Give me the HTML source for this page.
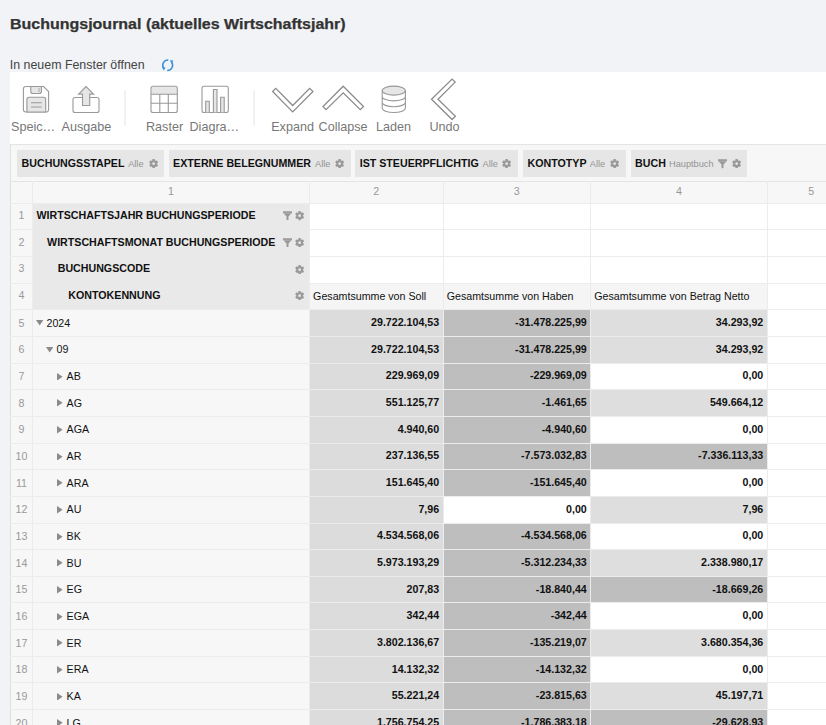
<!DOCTYPE html>
<html><head><meta charset="utf-8">
<style>
*{margin:0;padding:0;box-sizing:border-box}
html,body{width:826px;height:725px;overflow:hidden;background:#f2f3f7;font-family:"Liberation Sans",sans-serif;position:relative}
.abs{position:absolute;display:block}
.t{position:absolute;white-space:nowrap;line-height:1}
.b{font-weight:bold}
.cell{position:absolute}
.hl{position:absolute;height:1px;background:#e8e8e8}
.vl{position:absolute;width:1px;background:#e8e8e8}
</style></head><body>

<div class="t" style="left:10.00px;top:16.85px;font-size:14px;font-weight:bold;color:#333;transform:scaleX(1.142);transform-origin:0 0;-webkit-text-stroke:0.25px #333">Buchungsjournal (aktuelles Wirtschaftsjahr)</div>
<div class="t" style="left:9.80px;top:58.90px;font-size:12.4px;color:#444">In neuem Fenster öffnen</div>
<svg class="abs" style="left:0;top:0" width="190" height="80" viewBox="0 0 190 80"><g fill="none" stroke="#3990dd" stroke-width="1.5"><path d="M168.3 60A5.3 5.3 0 0 0 163.6 68.2"/><path d="M171.6 62.2A5.3 5.3 0 0 1 167.2 70.6"/></g><g fill="#3990dd"><path d="M162 67.2L165.6 67.4 163.8 70.6z"/><path d="M169.8 60.2L173.4 60.6 171.8 63.8z"/></g></svg>
<div class="abs" style="left:10px;top:72.2px;width:816px;height:71.8px;background:#fff"></div>
<svg class="abs" style="left:0;top:0" width="826" height="145" viewBox="0 0 826 145">
<g fill="none" stroke="#999" stroke-width="1.1">
 <path d="M26 86.5h17.6l5 5V109.5a2.5 2.5 0 0 1-2.5 2.5H25.9a2.5 2.5 0 0 1-2.5-2.5V89a2.5 2.5 0 0 1 2.5-2.5z"/>
 <path d="M30.8 86.5v5a2 2 0 0 0 2 2h6.6a2 2 0 0 0 2-2v-5z" fill="#e6e6e6"/>
 <path d="M39 88v4" stroke-width="0.8"/>
 <path d="M26.9 112V99.5a2.2 2.2 0 0 1 2.2-2.2h14.4a2.2 2.2 0 0 1 2.2 2.2V112z" fill="#e6e6e6"/>
 <path d="M31 102.8h10.8M31 107h10.8"/>
 <path d="M82.5 97.5h-7.5a2 2 0 0 0-2 2V110.5a2 2 0 0 0 2 2h22a2 2 0 0 0 2-2V99.5a2 2 0 0 0-2-2h-7.5"/>
 <path d="M86.1 86.5l-7.5 7.6h3.9v11.4h7.2V94.1h3.9z" fill="#e6e6e6"/>
 <path d="M151.6 86.8h25.2v7.4h-25.2z" fill="#e6e6e6" stroke="none"/>
 <rect x="151" y="86.2" width="26.3" height="26.3" rx="2"/>
 <path d="M151 94.2h26.3M151 103.2h26.3M159.8 94.2v18.3M168.3 94.2v18.3"/>
 <rect x="202" y="86.2" width="26.3" height="26.3" rx="2"/>
 <path d="M205.7 112.2V101.2h3.6v11M213.4 112.2V89.5h3.6v22.7M220.6 112.2V97.2h3.6v15" fill="#e6e6e6"/>
 <path d="M272.6 91.5l3.2-3.2 16.9 17.2 17-17.2 3.3 3.2-20.3 20.4z" stroke="#8a8a8a" stroke-width="1.25"/>
 <path d="M343.2 86.2l20.3 20.3-3.2 3.1-17.1-16.8-17.2 16.8-3-3.1z" stroke="#8a8a8a" stroke-width="1.25"/>
 <ellipse cx="393.8" cy="90.6" rx="11.6" ry="4.5" fill="#e6e6e6"/>
 <path d="M382.2 90.6v17.4c0 2.5 5.2 4.5 11.6 4.5s11.6-2 11.6-4.5V90.6M382.2 96.4c0 2.5 5.2 4.5 11.6 4.5s11.6-2 11.6-4.5M382.2 102.2c0 2.5 5.2 4.5 11.6 4.5s11.6-2 11.6-4.5"/>
 <path d="M452.1 79.1l3.1 3-17.2 17.1 17.4 17-3.3 3.3-20.6-20.3z" stroke="#8a8a8a" stroke-width="1.25"/>
</g>
<rect x="124.5" y="90.5" width="1" height="35" fill="#e3e3e3"/>
<rect x="253.5" y="90.5" width="1" height="35" fill="#e3e3e3"/>
</svg>

<div class="t" style="left:11.00px;top:121.03px;font-size:12.6px;color:#777">Speic…</div>
<div class="t" style="left:61.50px;top:121.03px;font-size:12.6px;color:#777">Ausgabe</div>
<div class="t" style="left:146.00px;top:121.03px;font-size:12.6px;color:#777">Raster</div>
<div class="t" style="left:189.50px;top:121.03px;font-size:12.6px;color:#777">Diagra…</div>
<div class="t" style="left:271.20px;top:121.03px;font-size:12.6px;color:#777">Expand</div>
<div class="t" style="left:318.60px;top:121.03px;font-size:12.6px;color:#777">Collapse</div>
<div class="t" style="left:376.00px;top:121.03px;font-size:12.6px;color:#777">Laden</div>
<div class="t" style="left:429.50px;top:121.03px;font-size:12.6px;color:#777">Undo</div>
<div class="abs" style="left:10px;top:143.8px;width:816px;height:38px;background:#f7f7f7;border-top:1px solid #e4e4e4;border-left:1px solid #e0e0e0"></div>
<div class="cell" style="left:17.4px;top:150.4px;width:146.5px;height:26.2px;background:#e6e6e6"></div>
<div class="t" style="left:21.60px;top:158.27px;font-size:10.67px;font-weight:bold;color:#111">BUCHUNGSSTAPEL</div>
<div class="t" style="left:128.20px;top:159.71px;font-size:9.2px;color:#939393">Alle</div>
<svg class="abs" style="left:148.55px;top:159.15px" width="9.30" height="9.30" viewBox="0 0 20 20"><g fill="#999"><path fill-rule="evenodd" d="M10 2.6a7.4 7.4 0 1 1 0 14.8 7.4 7.4 0 0 1 0-14.8zM10 7.1a2.9 2.9 0 1 0 0 5.8 2.9 2.9 0 0 0 0-5.8z"/><rect x="7.4" y="0.2" width="5.2" height="4" rx="1" transform="rotate(0 10 10)"/><rect x="7.4" y="0.2" width="5.2" height="4" rx="1" transform="rotate(60 10 10)"/><rect x="7.4" y="0.2" width="5.2" height="4" rx="1" transform="rotate(120 10 10)"/><rect x="7.4" y="0.2" width="5.2" height="4" rx="1" transform="rotate(180 10 10)"/><rect x="7.4" y="0.2" width="5.2" height="4" rx="1" transform="rotate(240 10 10)"/><rect x="7.4" y="0.2" width="5.2" height="4" rx="1" transform="rotate(300 10 10)"/></g></svg>
<div class="cell" style="left:168.5px;top:150.4px;width:182.1px;height:26.2px;background:#e6e6e6"></div>
<div class="t" style="left:173.10px;top:158.27px;font-size:10.67px;font-weight:bold;color:#111">EXTERNE BELEGNUMMER</div>
<div class="t" style="left:315.10px;top:159.71px;font-size:9.2px;color:#939393">Alle</div>
<svg class="abs" style="left:335.15px;top:159.15px" width="9.30" height="9.30" viewBox="0 0 20 20"><g fill="#999"><path fill-rule="evenodd" d="M10 2.6a7.4 7.4 0 1 1 0 14.8 7.4 7.4 0 0 1 0-14.8zM10 7.1a2.9 2.9 0 1 0 0 5.8 2.9 2.9 0 0 0 0-5.8z"/><rect x="7.4" y="0.2" width="5.2" height="4" rx="1" transform="rotate(0 10 10)"/><rect x="7.4" y="0.2" width="5.2" height="4" rx="1" transform="rotate(60 10 10)"/><rect x="7.4" y="0.2" width="5.2" height="4" rx="1" transform="rotate(120 10 10)"/><rect x="7.4" y="0.2" width="5.2" height="4" rx="1" transform="rotate(180 10 10)"/><rect x="7.4" y="0.2" width="5.2" height="4" rx="1" transform="rotate(240 10 10)"/><rect x="7.4" y="0.2" width="5.2" height="4" rx="1" transform="rotate(300 10 10)"/></g></svg>
<div class="cell" style="left:355.0px;top:150.4px;width:163.0px;height:26.2px;background:#e6e6e6"></div>
<div class="t" style="left:359.70px;top:158.27px;font-size:10.67px;font-weight:bold;color:#111">IST STEUERPFLICHTIG</div>
<div class="t" style="left:482.50px;top:159.71px;font-size:9.2px;color:#939393">Alle</div>
<svg class="abs" style="left:502.05px;top:159.15px" width="9.30" height="9.30" viewBox="0 0 20 20"><g fill="#999"><path fill-rule="evenodd" d="M10 2.6a7.4 7.4 0 1 1 0 14.8 7.4 7.4 0 0 1 0-14.8zM10 7.1a2.9 2.9 0 1 0 0 5.8 2.9 2.9 0 0 0 0-5.8z"/><rect x="7.4" y="0.2" width="5.2" height="4" rx="1" transform="rotate(0 10 10)"/><rect x="7.4" y="0.2" width="5.2" height="4" rx="1" transform="rotate(60 10 10)"/><rect x="7.4" y="0.2" width="5.2" height="4" rx="1" transform="rotate(120 10 10)"/><rect x="7.4" y="0.2" width="5.2" height="4" rx="1" transform="rotate(180 10 10)"/><rect x="7.4" y="0.2" width="5.2" height="4" rx="1" transform="rotate(240 10 10)"/><rect x="7.4" y="0.2" width="5.2" height="4" rx="1" transform="rotate(300 10 10)"/></g></svg>
<div class="cell" style="left:522.7px;top:150.4px;width:103.2px;height:26.2px;background:#e6e6e6"></div>
<div class="t" style="left:527.50px;top:158.27px;font-size:10.67px;font-weight:bold;color:#111">KONTOTYP</div>
<div class="t" style="left:589.80px;top:159.71px;font-size:9.2px;color:#939393">Alle</div>
<svg class="abs" style="left:609.85px;top:159.15px" width="9.30" height="9.30" viewBox="0 0 20 20"><g fill="#999"><path fill-rule="evenodd" d="M10 2.6a7.4 7.4 0 1 1 0 14.8 7.4 7.4 0 0 1 0-14.8zM10 7.1a2.9 2.9 0 1 0 0 5.8 2.9 2.9 0 0 0 0-5.8z"/><rect x="7.4" y="0.2" width="5.2" height="4" rx="1" transform="rotate(0 10 10)"/><rect x="7.4" y="0.2" width="5.2" height="4" rx="1" transform="rotate(60 10 10)"/><rect x="7.4" y="0.2" width="5.2" height="4" rx="1" transform="rotate(120 10 10)"/><rect x="7.4" y="0.2" width="5.2" height="4" rx="1" transform="rotate(180 10 10)"/><rect x="7.4" y="0.2" width="5.2" height="4" rx="1" transform="rotate(240 10 10)"/><rect x="7.4" y="0.2" width="5.2" height="4" rx="1" transform="rotate(300 10 10)"/></g></svg>
<div class="cell" style="left:630.6px;top:150.4px;width:116.5px;height:26.2px;background:#e6e6e6"></div>
<div class="t" style="left:635.10px;top:158.27px;font-size:10.67px;font-weight:bold;color:#111">BUCH</div>
<div class="t" style="left:669.10px;top:159.71px;font-size:9.2px;color:#939393">Hauptbuch</div>
<svg class="abs" style="left:717.60px;top:159.30px" width="9" height="9.4" viewBox="0 0 10 10"><path fill="#999" d="M0 0h10v1.6L6.1 6V9.3a0.7 0.7 0 0 1-0.7 0.7h-0.8a0.7 0.7 0 0 1-0.7-0.7V6L0 1.6z"/><path d="M0.8 2.3h8.4" stroke="#c4c4c4" stroke-width="0.5"/></svg>
<svg class="abs" style="left:731.65px;top:159.15px" width="9.30" height="9.30" viewBox="0 0 20 20"><g fill="#999"><path fill-rule="evenodd" d="M10 2.6a7.4 7.4 0 1 1 0 14.8 7.4 7.4 0 0 1 0-14.8zM10 7.1a2.9 2.9 0 1 0 0 5.8 2.9 2.9 0 0 0 0-5.8z"/><rect x="7.4" y="0.2" width="5.2" height="4" rx="1" transform="rotate(0 10 10)"/><rect x="7.4" y="0.2" width="5.2" height="4" rx="1" transform="rotate(60 10 10)"/><rect x="7.4" y="0.2" width="5.2" height="4" rx="1" transform="rotate(120 10 10)"/><rect x="7.4" y="0.2" width="5.2" height="4" rx="1" transform="rotate(180 10 10)"/><rect x="7.4" y="0.2" width="5.2" height="4" rx="1" transform="rotate(240 10 10)"/><rect x="7.4" y="0.2" width="5.2" height="4" rx="1" transform="rotate(300 10 10)"/></g></svg>
<div class="abs" style="left:10px;top:181.2px;width:816px;height:543.8px;background:#f7f7f7;border-left:1px solid #dedede;border-top:1px solid #e4e4e4"></div>
<div class="t" style="left:150.95px;top:185.97px;font-size:10.67px;width:40px;text-align:center;color:#999">1</div>
<div class="t" style="left:356.20px;top:185.97px;font-size:10.67px;width:40px;text-align:center;color:#999">2</div>
<div class="t" style="left:496.80px;top:185.97px;font-size:10.67px;width:40px;text-align:center;color:#999">3</div>
<div class="t" style="left:658.85px;top:185.97px;font-size:10.67px;width:40px;text-align:center;color:#999">4</div>
<div class="t" style="left:791.20px;top:185.97px;font-size:10.67px;width:40px;text-align:center;color:#999">5</div>
<div class="cell" style="left:33px;top:203.20px;width:276.4px;height:106.60px;background:#e9e9e9"></div>
<div class="cell" style="left:309.4px;top:203.20px;width:457.7px;height:26.65px;background:#fff"></div>
<div class="cell" style="left:767.1px;top:203.20px;width:70px;height:26.65px;background:#fff"></div>
<div class="t" style="left:10.00px;top:210.17px;font-size:10.67px;width:23px;text-align:center;color:#999">1</div>
<div class="t" style="left:36.50px;top:210.17px;font-size:10.67px;font-weight:bold;color:#111">WIRTSCHAFTSJAHR BUCHUNGSPERIODE</div>
<svg class="abs" style="left:283.30px;top:211.10px" width="9" height="9.4" viewBox="0 0 10 10"><path fill="#999" d="M0 0h10v1.6L6.1 6V9.3a0.7 0.7 0 0 1-0.7 0.7h-0.8a0.7 0.7 0 0 1-0.7-0.7V6L0 1.6z"/><path d="M0.8 2.3h8.4" stroke="#c4c4c4" stroke-width="0.5"/></svg>
<svg class="abs" style="left:294.75px;top:211.25px" width="9.30" height="9.30" viewBox="0 0 20 20"><g fill="#999"><path fill-rule="evenodd" d="M10 2.6a7.4 7.4 0 1 1 0 14.8 7.4 7.4 0 0 1 0-14.8zM10 7.1a2.9 2.9 0 1 0 0 5.8 2.9 2.9 0 0 0 0-5.8z"/><rect x="7.4" y="0.2" width="5.2" height="4" rx="1" transform="rotate(0 10 10)"/><rect x="7.4" y="0.2" width="5.2" height="4" rx="1" transform="rotate(60 10 10)"/><rect x="7.4" y="0.2" width="5.2" height="4" rx="1" transform="rotate(120 10 10)"/><rect x="7.4" y="0.2" width="5.2" height="4" rx="1" transform="rotate(180 10 10)"/><rect x="7.4" y="0.2" width="5.2" height="4" rx="1" transform="rotate(240 10 10)"/><rect x="7.4" y="0.2" width="5.2" height="4" rx="1" transform="rotate(300 10 10)"/></g></svg>
<div class="cell" style="left:309.4px;top:229.85px;width:457.7px;height:26.65px;background:#fff"></div>
<div class="cell" style="left:767.1px;top:229.85px;width:70px;height:26.65px;background:#fff"></div>
<div class="t" style="left:10.00px;top:236.82px;font-size:10.67px;width:23px;text-align:center;color:#999">2</div>
<div class="t" style="left:47.10px;top:236.82px;font-size:10.67px;font-weight:bold;color:#111">WIRTSCHAFTSMONAT BUCHUNGSPERIODE</div>
<svg class="abs" style="left:283.30px;top:237.75px" width="9" height="9.4" viewBox="0 0 10 10"><path fill="#999" d="M0 0h10v1.6L6.1 6V9.3a0.7 0.7 0 0 1-0.7 0.7h-0.8a0.7 0.7 0 0 1-0.7-0.7V6L0 1.6z"/><path d="M0.8 2.3h8.4" stroke="#c4c4c4" stroke-width="0.5"/></svg>
<svg class="abs" style="left:294.75px;top:237.90px" width="9.30" height="9.30" viewBox="0 0 20 20"><g fill="#999"><path fill-rule="evenodd" d="M10 2.6a7.4 7.4 0 1 1 0 14.8 7.4 7.4 0 0 1 0-14.8zM10 7.1a2.9 2.9 0 1 0 0 5.8 2.9 2.9 0 0 0 0-5.8z"/><rect x="7.4" y="0.2" width="5.2" height="4" rx="1" transform="rotate(0 10 10)"/><rect x="7.4" y="0.2" width="5.2" height="4" rx="1" transform="rotate(60 10 10)"/><rect x="7.4" y="0.2" width="5.2" height="4" rx="1" transform="rotate(120 10 10)"/><rect x="7.4" y="0.2" width="5.2" height="4" rx="1" transform="rotate(180 10 10)"/><rect x="7.4" y="0.2" width="5.2" height="4" rx="1" transform="rotate(240 10 10)"/><rect x="7.4" y="0.2" width="5.2" height="4" rx="1" transform="rotate(300 10 10)"/></g></svg>
<div class="cell" style="left:309.4px;top:256.50px;width:457.7px;height:26.65px;background:#fff"></div>
<div class="cell" style="left:767.1px;top:256.50px;width:70px;height:26.65px;background:#fff"></div>
<div class="t" style="left:10.00px;top:263.47px;font-size:10.67px;width:23px;text-align:center;color:#999">3</div>
<div class="t" style="left:57.70px;top:263.47px;font-size:10.67px;font-weight:bold;color:#111">BUCHUNGSCODE</div>
<svg class="abs" style="left:294.75px;top:264.55px" width="9.30" height="9.30" viewBox="0 0 20 20"><g fill="#999"><path fill-rule="evenodd" d="M10 2.6a7.4 7.4 0 1 1 0 14.8 7.4 7.4 0 0 1 0-14.8zM10 7.1a2.9 2.9 0 1 0 0 5.8 2.9 2.9 0 0 0 0-5.8z"/><rect x="7.4" y="0.2" width="5.2" height="4" rx="1" transform="rotate(0 10 10)"/><rect x="7.4" y="0.2" width="5.2" height="4" rx="1" transform="rotate(60 10 10)"/><rect x="7.4" y="0.2" width="5.2" height="4" rx="1" transform="rotate(120 10 10)"/><rect x="7.4" y="0.2" width="5.2" height="4" rx="1" transform="rotate(180 10 10)"/><rect x="7.4" y="0.2" width="5.2" height="4" rx="1" transform="rotate(240 10 10)"/><rect x="7.4" y="0.2" width="5.2" height="4" rx="1" transform="rotate(300 10 10)"/></g></svg>
<div class="cell" style="left:309.4px;top:283.15px;width:457.7px;height:26.65px;background:#f5f5f5"></div>
<div class="cell" style="left:767.1px;top:283.15px;width:70px;height:26.65px;background:#fff"></div>
<div class="t" style="left:10.00px;top:290.12px;font-size:10.67px;width:23px;text-align:center;color:#999">4</div>
<div class="t" style="left:68.30px;top:290.12px;font-size:10.67px;font-weight:bold;color:#111">KONTOKENNUNG</div>
<svg class="abs" style="left:294.75px;top:291.20px" width="9.30" height="9.30" viewBox="0 0 20 20"><g fill="#999"><path fill-rule="evenodd" d="M10 2.6a7.4 7.4 0 1 1 0 14.8 7.4 7.4 0 0 1 0-14.8zM10 7.1a2.9 2.9 0 1 0 0 5.8 2.9 2.9 0 0 0 0-5.8z"/><rect x="7.4" y="0.2" width="5.2" height="4" rx="1" transform="rotate(0 10 10)"/><rect x="7.4" y="0.2" width="5.2" height="4" rx="1" transform="rotate(60 10 10)"/><rect x="7.4" y="0.2" width="5.2" height="4" rx="1" transform="rotate(120 10 10)"/><rect x="7.4" y="0.2" width="5.2" height="4" rx="1" transform="rotate(180 10 10)"/><rect x="7.4" y="0.2" width="5.2" height="4" rx="1" transform="rotate(240 10 10)"/><rect x="7.4" y="0.2" width="5.2" height="4" rx="1" transform="rotate(300 10 10)"/></g></svg>
<div class="t" style="left:313.10px;top:290.72px;font-size:10.67px;color:#111">Gesamtsumme von Soll</div>
<div class="t" style="left:446.70px;top:290.72px;font-size:10.67px;color:#111">Gesamtsumme von Haben</div>
<div class="t" style="left:594.30px;top:290.72px;font-size:10.67px;color:#111">Gesamtsumme von Betrag Netto</div>
<div class="cell" style="left:309.4px;top:309.80px;width:133.6px;height:26.65px;background:#dcdcdc"></div>
<div class="cell" style="left:443px;top:309.80px;width:147.6px;height:26.65px;background:#bebebe"></div>
<div class="cell" style="left:590.6px;top:309.80px;width:176.5px;height:26.65px;background:#dedede"></div>
<div class="cell" style="left:767.1px;top:309.80px;width:70px;height:26.65px;background:#fff"></div>
<div class="t" style="left:10.00px;top:317.77px;font-size:10.67px;width:23px;text-align:center;color:#999">5</div>
<svg class="abs" style="left:36.00px;top:320.40px" width="7.4" height="5.6" viewBox="0 0 7.4 5.6"><path d="M0 0h7.4L3.7 5.6z" fill="#8a8a8a"/></svg>
<div class="t" style="left:46.50px;top:317.77px;font-size:10.67px;color:#111">2024</div>
<div class="t" style="left:309.40px;top:317.07px;font-size:10.67px;width:129.8px;text-align:right;font-weight:bold;color:#111">29.722.104,53</div>
<div class="t" style="left:443.00px;top:317.07px;font-size:10.67px;width:143.8px;text-align:right;font-weight:bold;color:#111">-31.478.225,99</div>
<div class="t" style="left:590.60px;top:317.07px;font-size:10.67px;width:172.7px;text-align:right;font-weight:bold;color:#111">34.293,92</div>
<div class="cell" style="left:309.4px;top:336.45px;width:133.6px;height:26.65px;background:#dcdcdc"></div>
<div class="cell" style="left:443px;top:336.45px;width:147.6px;height:26.65px;background:#bebebe"></div>
<div class="cell" style="left:590.6px;top:336.45px;width:176.5px;height:26.65px;background:#dedede"></div>
<div class="cell" style="left:767.1px;top:336.45px;width:70px;height:26.65px;background:#fff"></div>
<div class="t" style="left:10.00px;top:344.42px;font-size:10.67px;width:23px;text-align:center;color:#999">6</div>
<svg class="abs" style="left:46.00px;top:347.05px" width="7.4" height="5.6" viewBox="0 0 7.4 5.6"><path d="M0 0h7.4L3.7 5.6z" fill="#8a8a8a"/></svg>
<div class="t" style="left:56.50px;top:344.42px;font-size:10.67px;color:#111">09</div>
<div class="t" style="left:309.40px;top:343.72px;font-size:10.67px;width:129.8px;text-align:right;font-weight:bold;color:#111">29.722.104,53</div>
<div class="t" style="left:443.00px;top:343.72px;font-size:10.67px;width:143.8px;text-align:right;font-weight:bold;color:#111">-31.478.225,99</div>
<div class="t" style="left:590.60px;top:343.72px;font-size:10.67px;width:172.7px;text-align:right;font-weight:bold;color:#111">34.293,92</div>
<div class="cell" style="left:309.4px;top:363.10px;width:133.6px;height:26.65px;background:#dcdcdc"></div>
<div class="cell" style="left:443px;top:363.10px;width:147.6px;height:26.65px;background:#bebebe"></div>
<div class="cell" style="left:590.6px;top:363.10px;width:176.5px;height:26.65px;background:#ffffff"></div>
<div class="cell" style="left:767.1px;top:363.10px;width:70px;height:26.65px;background:#fff"></div>
<div class="t" style="left:10.00px;top:371.07px;font-size:10.67px;width:23px;text-align:center;color:#999">7</div>
<svg class="abs" style="left:57.30px;top:372.80px" width="5.6" height="7.6" viewBox="0 0 5.6 7.6"><path d="M0 0L5.6 3.8 0 7.6z" fill="#8a8a8a"/></svg>
<div class="t" style="left:66.60px;top:371.07px;font-size:10.67px;color:#111">AB</div>
<div class="t" style="left:309.40px;top:370.37px;font-size:10.67px;width:129.8px;text-align:right;font-weight:bold;color:#111">229.969,09</div>
<div class="t" style="left:443.00px;top:370.37px;font-size:10.67px;width:143.8px;text-align:right;font-weight:bold;color:#111">-229.969,09</div>
<div class="t" style="left:590.60px;top:370.37px;font-size:10.67px;width:172.7px;text-align:right;font-weight:bold;color:#111">0,00</div>
<div class="cell" style="left:309.4px;top:389.75px;width:133.6px;height:26.65px;background:#dcdcdc"></div>
<div class="cell" style="left:443px;top:389.75px;width:147.6px;height:26.65px;background:#bebebe"></div>
<div class="cell" style="left:590.6px;top:389.75px;width:176.5px;height:26.65px;background:#dedede"></div>
<div class="cell" style="left:767.1px;top:389.75px;width:70px;height:26.65px;background:#fff"></div>
<div class="t" style="left:10.00px;top:397.72px;font-size:10.67px;width:23px;text-align:center;color:#999">8</div>
<svg class="abs" style="left:57.30px;top:399.45px" width="5.6" height="7.6" viewBox="0 0 5.6 7.6"><path d="M0 0L5.6 3.8 0 7.6z" fill="#8a8a8a"/></svg>
<div class="t" style="left:66.60px;top:397.72px;font-size:10.67px;color:#111">AG</div>
<div class="t" style="left:309.40px;top:397.02px;font-size:10.67px;width:129.8px;text-align:right;font-weight:bold;color:#111">551.125,77</div>
<div class="t" style="left:443.00px;top:397.02px;font-size:10.67px;width:143.8px;text-align:right;font-weight:bold;color:#111">-1.461,65</div>
<div class="t" style="left:590.60px;top:397.02px;font-size:10.67px;width:172.7px;text-align:right;font-weight:bold;color:#111">549.664,12</div>
<div class="cell" style="left:309.4px;top:416.40px;width:133.6px;height:26.65px;background:#dcdcdc"></div>
<div class="cell" style="left:443px;top:416.40px;width:147.6px;height:26.65px;background:#bebebe"></div>
<div class="cell" style="left:590.6px;top:416.40px;width:176.5px;height:26.65px;background:#ffffff"></div>
<div class="cell" style="left:767.1px;top:416.40px;width:70px;height:26.65px;background:#fff"></div>
<div class="t" style="left:10.00px;top:424.37px;font-size:10.67px;width:23px;text-align:center;color:#999">9</div>
<svg class="abs" style="left:57.30px;top:426.10px" width="5.6" height="7.6" viewBox="0 0 5.6 7.6"><path d="M0 0L5.6 3.8 0 7.6z" fill="#8a8a8a"/></svg>
<div class="t" style="left:66.60px;top:424.37px;font-size:10.67px;color:#111">AGA</div>
<div class="t" style="left:309.40px;top:423.67px;font-size:10.67px;width:129.8px;text-align:right;font-weight:bold;color:#111">4.940,60</div>
<div class="t" style="left:443.00px;top:423.67px;font-size:10.67px;width:143.8px;text-align:right;font-weight:bold;color:#111">-4.940,60</div>
<div class="t" style="left:590.60px;top:423.67px;font-size:10.67px;width:172.7px;text-align:right;font-weight:bold;color:#111">0,00</div>
<div class="cell" style="left:309.4px;top:443.05px;width:133.6px;height:26.65px;background:#dcdcdc"></div>
<div class="cell" style="left:443px;top:443.05px;width:147.6px;height:26.65px;background:#bebebe"></div>
<div class="cell" style="left:590.6px;top:443.05px;width:176.5px;height:26.65px;background:#bebebe"></div>
<div class="cell" style="left:767.1px;top:443.05px;width:70px;height:26.65px;background:#fff"></div>
<div class="t" style="left:10.00px;top:451.02px;font-size:10.67px;width:23px;text-align:center;color:#999">10</div>
<svg class="abs" style="left:57.30px;top:452.75px" width="5.6" height="7.6" viewBox="0 0 5.6 7.6"><path d="M0 0L5.6 3.8 0 7.6z" fill="#8a8a8a"/></svg>
<div class="t" style="left:66.60px;top:451.02px;font-size:10.67px;color:#111">AR</div>
<div class="t" style="left:309.40px;top:450.32px;font-size:10.67px;width:129.8px;text-align:right;font-weight:bold;color:#111">237.136,55</div>
<div class="t" style="left:443.00px;top:450.32px;font-size:10.67px;width:143.8px;text-align:right;font-weight:bold;color:#111">-7.573.032,83</div>
<div class="t" style="left:590.60px;top:450.32px;font-size:10.67px;width:172.7px;text-align:right;font-weight:bold;color:#111">-7.336.113,33</div>
<div class="cell" style="left:309.4px;top:469.70px;width:133.6px;height:26.65px;background:#dcdcdc"></div>
<div class="cell" style="left:443px;top:469.70px;width:147.6px;height:26.65px;background:#bebebe"></div>
<div class="cell" style="left:590.6px;top:469.70px;width:176.5px;height:26.65px;background:#ffffff"></div>
<div class="cell" style="left:767.1px;top:469.70px;width:70px;height:26.65px;background:#fff"></div>
<div class="t" style="left:10.00px;top:477.67px;font-size:10.67px;width:23px;text-align:center;color:#999">11</div>
<svg class="abs" style="left:57.30px;top:479.40px" width="5.6" height="7.6" viewBox="0 0 5.6 7.6"><path d="M0 0L5.6 3.8 0 7.6z" fill="#8a8a8a"/></svg>
<div class="t" style="left:66.60px;top:477.67px;font-size:10.67px;color:#111">ARA</div>
<div class="t" style="left:309.40px;top:476.97px;font-size:10.67px;width:129.8px;text-align:right;font-weight:bold;color:#111">151.645,40</div>
<div class="t" style="left:443.00px;top:476.97px;font-size:10.67px;width:143.8px;text-align:right;font-weight:bold;color:#111">-151.645,40</div>
<div class="t" style="left:590.60px;top:476.97px;font-size:10.67px;width:172.7px;text-align:right;font-weight:bold;color:#111">0,00</div>
<div class="cell" style="left:309.4px;top:496.35px;width:133.6px;height:26.65px;background:#dcdcdc"></div>
<div class="cell" style="left:443px;top:496.35px;width:147.6px;height:26.65px;background:#ffffff"></div>
<div class="cell" style="left:590.6px;top:496.35px;width:176.5px;height:26.65px;background:#dedede"></div>
<div class="cell" style="left:767.1px;top:496.35px;width:70px;height:26.65px;background:#fff"></div>
<div class="t" style="left:10.00px;top:504.32px;font-size:10.67px;width:23px;text-align:center;color:#999">12</div>
<svg class="abs" style="left:57.30px;top:506.05px" width="5.6" height="7.6" viewBox="0 0 5.6 7.6"><path d="M0 0L5.6 3.8 0 7.6z" fill="#8a8a8a"/></svg>
<div class="t" style="left:66.60px;top:504.32px;font-size:10.67px;color:#111">AU</div>
<div class="t" style="left:309.40px;top:503.62px;font-size:10.67px;width:129.8px;text-align:right;font-weight:bold;color:#111">7,96</div>
<div class="t" style="left:443.00px;top:503.62px;font-size:10.67px;width:143.8px;text-align:right;font-weight:bold;color:#111">0,00</div>
<div class="t" style="left:590.60px;top:503.62px;font-size:10.67px;width:172.7px;text-align:right;font-weight:bold;color:#111">7,96</div>
<div class="cell" style="left:309.4px;top:523.00px;width:133.6px;height:26.65px;background:#dcdcdc"></div>
<div class="cell" style="left:443px;top:523.00px;width:147.6px;height:26.65px;background:#bebebe"></div>
<div class="cell" style="left:590.6px;top:523.00px;width:176.5px;height:26.65px;background:#ffffff"></div>
<div class="cell" style="left:767.1px;top:523.00px;width:70px;height:26.65px;background:#fff"></div>
<div class="t" style="left:10.00px;top:530.97px;font-size:10.67px;width:23px;text-align:center;color:#999">13</div>
<svg class="abs" style="left:57.30px;top:532.70px" width="5.6" height="7.6" viewBox="0 0 5.6 7.6"><path d="M0 0L5.6 3.8 0 7.6z" fill="#8a8a8a"/></svg>
<div class="t" style="left:66.60px;top:530.97px;font-size:10.67px;color:#111">BK</div>
<div class="t" style="left:309.40px;top:530.27px;font-size:10.67px;width:129.8px;text-align:right;font-weight:bold;color:#111">4.534.568,06</div>
<div class="t" style="left:443.00px;top:530.27px;font-size:10.67px;width:143.8px;text-align:right;font-weight:bold;color:#111">-4.534.568,06</div>
<div class="t" style="left:590.60px;top:530.27px;font-size:10.67px;width:172.7px;text-align:right;font-weight:bold;color:#111">0,00</div>
<div class="cell" style="left:309.4px;top:549.65px;width:133.6px;height:26.65px;background:#dcdcdc"></div>
<div class="cell" style="left:443px;top:549.65px;width:147.6px;height:26.65px;background:#bebebe"></div>
<div class="cell" style="left:590.6px;top:549.65px;width:176.5px;height:26.65px;background:#dedede"></div>
<div class="cell" style="left:767.1px;top:549.65px;width:70px;height:26.65px;background:#fff"></div>
<div class="t" style="left:10.00px;top:557.62px;font-size:10.67px;width:23px;text-align:center;color:#999">14</div>
<svg class="abs" style="left:57.30px;top:559.35px" width="5.6" height="7.6" viewBox="0 0 5.6 7.6"><path d="M0 0L5.6 3.8 0 7.6z" fill="#8a8a8a"/></svg>
<div class="t" style="left:66.60px;top:557.62px;font-size:10.67px;color:#111">BU</div>
<div class="t" style="left:309.40px;top:556.92px;font-size:10.67px;width:129.8px;text-align:right;font-weight:bold;color:#111">5.973.193,29</div>
<div class="t" style="left:443.00px;top:556.92px;font-size:10.67px;width:143.8px;text-align:right;font-weight:bold;color:#111">-5.312.234,33</div>
<div class="t" style="left:590.60px;top:556.92px;font-size:10.67px;width:172.7px;text-align:right;font-weight:bold;color:#111">2.338.980,17</div>
<div class="cell" style="left:309.4px;top:576.30px;width:133.6px;height:26.65px;background:#dcdcdc"></div>
<div class="cell" style="left:443px;top:576.30px;width:147.6px;height:26.65px;background:#bebebe"></div>
<div class="cell" style="left:590.6px;top:576.30px;width:176.5px;height:26.65px;background:#bebebe"></div>
<div class="cell" style="left:767.1px;top:576.30px;width:70px;height:26.65px;background:#fff"></div>
<div class="t" style="left:10.00px;top:584.27px;font-size:10.67px;width:23px;text-align:center;color:#999">15</div>
<svg class="abs" style="left:57.30px;top:586.00px" width="5.6" height="7.6" viewBox="0 0 5.6 7.6"><path d="M0 0L5.6 3.8 0 7.6z" fill="#8a8a8a"/></svg>
<div class="t" style="left:66.60px;top:584.27px;font-size:10.67px;color:#111">EG</div>
<div class="t" style="left:309.40px;top:583.57px;font-size:10.67px;width:129.8px;text-align:right;font-weight:bold;color:#111">207,83</div>
<div class="t" style="left:443.00px;top:583.57px;font-size:10.67px;width:143.8px;text-align:right;font-weight:bold;color:#111">-18.840,44</div>
<div class="t" style="left:590.60px;top:583.57px;font-size:10.67px;width:172.7px;text-align:right;font-weight:bold;color:#111">-18.669,26</div>
<div class="cell" style="left:309.4px;top:602.95px;width:133.6px;height:26.65px;background:#dcdcdc"></div>
<div class="cell" style="left:443px;top:602.95px;width:147.6px;height:26.65px;background:#bebebe"></div>
<div class="cell" style="left:590.6px;top:602.95px;width:176.5px;height:26.65px;background:#ffffff"></div>
<div class="cell" style="left:767.1px;top:602.95px;width:70px;height:26.65px;background:#fff"></div>
<div class="t" style="left:10.00px;top:610.92px;font-size:10.67px;width:23px;text-align:center;color:#999">16</div>
<svg class="abs" style="left:57.30px;top:612.65px" width="5.6" height="7.6" viewBox="0 0 5.6 7.6"><path d="M0 0L5.6 3.8 0 7.6z" fill="#8a8a8a"/></svg>
<div class="t" style="left:66.60px;top:610.92px;font-size:10.67px;color:#111">EGA</div>
<div class="t" style="left:309.40px;top:610.22px;font-size:10.67px;width:129.8px;text-align:right;font-weight:bold;color:#111">342,44</div>
<div class="t" style="left:443.00px;top:610.22px;font-size:10.67px;width:143.8px;text-align:right;font-weight:bold;color:#111">-342,44</div>
<div class="t" style="left:590.60px;top:610.22px;font-size:10.67px;width:172.7px;text-align:right;font-weight:bold;color:#111">0,00</div>
<div class="cell" style="left:309.4px;top:629.60px;width:133.6px;height:26.65px;background:#dcdcdc"></div>
<div class="cell" style="left:443px;top:629.60px;width:147.6px;height:26.65px;background:#bebebe"></div>
<div class="cell" style="left:590.6px;top:629.60px;width:176.5px;height:26.65px;background:#dedede"></div>
<div class="cell" style="left:767.1px;top:629.60px;width:70px;height:26.65px;background:#fff"></div>
<div class="t" style="left:10.00px;top:637.57px;font-size:10.67px;width:23px;text-align:center;color:#999">17</div>
<svg class="abs" style="left:57.30px;top:639.30px" width="5.6" height="7.6" viewBox="0 0 5.6 7.6"><path d="M0 0L5.6 3.8 0 7.6z" fill="#8a8a8a"/></svg>
<div class="t" style="left:66.60px;top:637.57px;font-size:10.67px;color:#111">ER</div>
<div class="t" style="left:309.40px;top:636.87px;font-size:10.67px;width:129.8px;text-align:right;font-weight:bold;color:#111">3.802.136,67</div>
<div class="t" style="left:443.00px;top:636.87px;font-size:10.67px;width:143.8px;text-align:right;font-weight:bold;color:#111">-135.219,07</div>
<div class="t" style="left:590.60px;top:636.87px;font-size:10.67px;width:172.7px;text-align:right;font-weight:bold;color:#111">3.680.354,36</div>
<div class="cell" style="left:309.4px;top:656.25px;width:133.6px;height:26.65px;background:#dcdcdc"></div>
<div class="cell" style="left:443px;top:656.25px;width:147.6px;height:26.65px;background:#bebebe"></div>
<div class="cell" style="left:590.6px;top:656.25px;width:176.5px;height:26.65px;background:#ffffff"></div>
<div class="cell" style="left:767.1px;top:656.25px;width:70px;height:26.65px;background:#fff"></div>
<div class="t" style="left:10.00px;top:664.22px;font-size:10.67px;width:23px;text-align:center;color:#999">18</div>
<svg class="abs" style="left:57.30px;top:665.95px" width="5.6" height="7.6" viewBox="0 0 5.6 7.6"><path d="M0 0L5.6 3.8 0 7.6z" fill="#8a8a8a"/></svg>
<div class="t" style="left:66.60px;top:664.22px;font-size:10.67px;color:#111">ERA</div>
<div class="t" style="left:309.40px;top:663.52px;font-size:10.67px;width:129.8px;text-align:right;font-weight:bold;color:#111">14.132,32</div>
<div class="t" style="left:443.00px;top:663.52px;font-size:10.67px;width:143.8px;text-align:right;font-weight:bold;color:#111">-14.132,32</div>
<div class="t" style="left:590.60px;top:663.52px;font-size:10.67px;width:172.7px;text-align:right;font-weight:bold;color:#111">0,00</div>
<div class="cell" style="left:309.4px;top:682.90px;width:133.6px;height:26.65px;background:#dcdcdc"></div>
<div class="cell" style="left:443px;top:682.90px;width:147.6px;height:26.65px;background:#bebebe"></div>
<div class="cell" style="left:590.6px;top:682.90px;width:176.5px;height:26.65px;background:#dedede"></div>
<div class="cell" style="left:767.1px;top:682.90px;width:70px;height:26.65px;background:#fff"></div>
<div class="t" style="left:10.00px;top:690.87px;font-size:10.67px;width:23px;text-align:center;color:#999">19</div>
<svg class="abs" style="left:57.30px;top:692.60px" width="5.6" height="7.6" viewBox="0 0 5.6 7.6"><path d="M0 0L5.6 3.8 0 7.6z" fill="#8a8a8a"/></svg>
<div class="t" style="left:66.60px;top:690.87px;font-size:10.67px;color:#111">KA</div>
<div class="t" style="left:309.40px;top:690.17px;font-size:10.67px;width:129.8px;text-align:right;font-weight:bold;color:#111">55.221,24</div>
<div class="t" style="left:443.00px;top:690.17px;font-size:10.67px;width:143.8px;text-align:right;font-weight:bold;color:#111">-23.815,63</div>
<div class="t" style="left:590.60px;top:690.17px;font-size:10.67px;width:172.7px;text-align:right;font-weight:bold;color:#111">45.197,71</div>
<div class="cell" style="left:309.4px;top:709.55px;width:133.6px;height:26.65px;background:#dcdcdc"></div>
<div class="cell" style="left:443px;top:709.55px;width:147.6px;height:26.65px;background:#bebebe"></div>
<div class="cell" style="left:590.6px;top:709.55px;width:176.5px;height:26.65px;background:#bebebe"></div>
<div class="cell" style="left:767.1px;top:709.55px;width:70px;height:26.65px;background:#fff"></div>
<div class="t" style="left:10.00px;top:717.52px;font-size:10.67px;width:23px;text-align:center;color:#999">20</div>
<svg class="abs" style="left:57.30px;top:719.25px" width="5.6" height="7.6" viewBox="0 0 5.6 7.6"><path d="M0 0L5.6 3.8 0 7.6z" fill="#8a8a8a"/></svg>
<div class="t" style="left:66.60px;top:717.52px;font-size:10.67px;color:#111">LG</div>
<div class="t" style="left:309.40px;top:716.82px;font-size:10.67px;width:129.8px;text-align:right;font-weight:bold;color:#111">1.756.754,25</div>
<div class="t" style="left:443.00px;top:716.82px;font-size:10.67px;width:143.8px;text-align:right;font-weight:bold;color:#111">-1.786.383,18</div>
<div class="t" style="left:590.60px;top:716.82px;font-size:10.67px;width:172.7px;text-align:right;font-weight:bold;color:#111">-29.628,93</div>
<div class="hl" style="left:10px;top:202.70px;width:816px;background:#ececec"></div>
<div class="hl" style="left:10px;top:229.35px;width:23px;background:#ececec"></div>
<div class="hl" style="left:309px;top:229.35px;width:517px;background:#ececec"></div>
<div class="hl" style="left:10px;top:256.00px;width:23px;background:#ececec"></div>
<div class="hl" style="left:309px;top:256.00px;width:517px;background:#ececec"></div>
<div class="hl" style="left:10px;top:282.65px;width:23px;background:#ececec"></div>
<div class="hl" style="left:309px;top:282.65px;width:517px;background:#ececec"></div>
<div class="hl" style="left:10px;top:309.30px;width:816px;background:#ececec"></div>
<div class="hl" style="left:10px;top:335.95px;width:816px;background:#ececec"></div>
<div class="hl" style="left:10px;top:362.60px;width:816px;background:#ececec"></div>
<div class="hl" style="left:10px;top:389.25px;width:816px;background:#ececec"></div>
<div class="hl" style="left:10px;top:415.90px;width:816px;background:#ececec"></div>
<div class="hl" style="left:10px;top:442.55px;width:816px;background:#ececec"></div>
<div class="hl" style="left:10px;top:469.20px;width:816px;background:#ececec"></div>
<div class="hl" style="left:10px;top:495.85px;width:816px;background:#ececec"></div>
<div class="hl" style="left:10px;top:522.50px;width:816px;background:#ececec"></div>
<div class="hl" style="left:10px;top:549.15px;width:816px;background:#ececec"></div>
<div class="hl" style="left:10px;top:575.80px;width:816px;background:#ececec"></div>
<div class="hl" style="left:10px;top:602.45px;width:816px;background:#ececec"></div>
<div class="hl" style="left:10px;top:629.10px;width:816px;background:#ececec"></div>
<div class="hl" style="left:10px;top:655.75px;width:816px;background:#ececec"></div>
<div class="hl" style="left:10px;top:682.40px;width:816px;background:#ececec"></div>
<div class="hl" style="left:10px;top:709.05px;width:816px;background:#ececec"></div>
<div class="hl" style="left:10px;top:735.70px;width:816px;background:#ececec"></div>
<div class="vl" style="left:32.0px;top:181.2px;height:543.8px;background:#ececec"></div>
<div class="vl" style="left:308.9px;top:181.2px;height:543.8px;background:#ececec"></div>
<div class="vl" style="left:442.5px;top:181.2px;height:543.8px;background:#ececec"></div>
<div class="vl" style="left:590.1px;top:181.2px;height:543.8px;background:#ececec"></div>
<div class="vl" style="left:766.6px;top:181.2px;height:543.8px;background:#ececec"></div>
</body></html>
